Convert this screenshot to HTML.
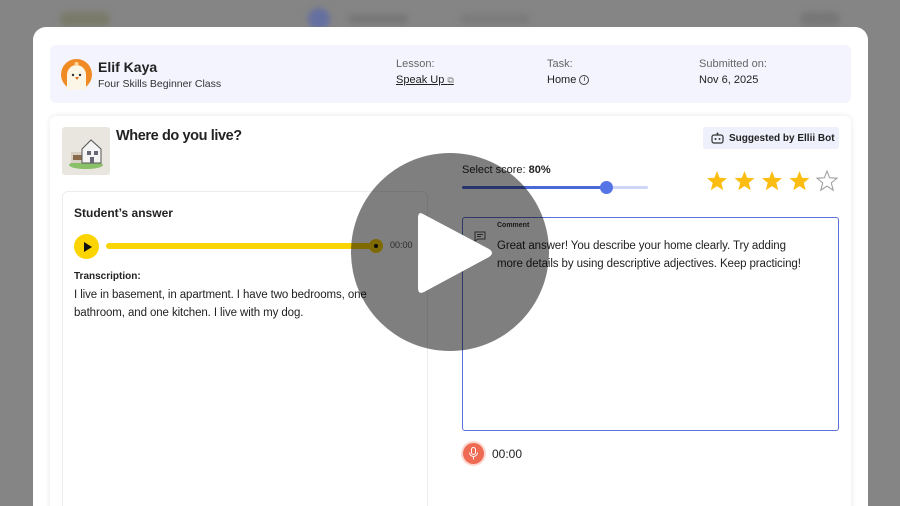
<!DOCTYPE html>
<html><head><meta charset="utf-8"><style>
*{box-sizing:border-box;margin:0;padding:0}
html,body{width:900px;height:506px;overflow:hidden}
body{background:#858585;font-family:"Liberation Sans",sans-serif;color:#222;position:relative}
.topblur{position:absolute;top:0;left:0;width:900px;height:40px}
.modal{position:absolute;left:33px;top:27px;width:835px;height:479px;background:#fff;border-radius:13px 13px 0 0}
.hdr{position:absolute;left:17px;top:18px;width:801px;height:58px;background:#f3f4fd;border-radius:6px}
.lbl{position:absolute;font-size:11px;color:#666}
.val{position:absolute;font-size:11px;color:#222}
.card{position:absolute;left:17px;top:89px;width:801px;height:400px;background:#fff;border-radius:6px;box-shadow:0 0 6px rgba(0,0,0,.1)}
.ans{position:absolute;left:12px;top:75px;width:366px;height:330px;border:1px solid #ececec;border-radius:6px}
.cm{position:absolute;left:412px;top:101px;width:377px;height:214px;border:1.5px solid #5b72d6;border-radius:3px}
.overlay{position:absolute;left:351px;top:153px;width:198px;height:198px;border-radius:50%;background:rgba(0,0,0,.5)}
</style></head><body>
<div class="topblur">
<div style="position:absolute;left:60px;top:12px;width:50px;height:14px;background:#7a7a6a;border-radius:7px;filter:blur(3px)"></div>
<div style="position:absolute;left:308px;top:8px;width:22px;height:22px;background:#6670a0;border-radius:50%;filter:blur(3px)"></div>
<div style="position:absolute;left:348px;top:14px;width:60px;height:10px;background:#777;border-radius:5px;filter:blur(3px)"></div>
<div style="position:absolute;left:460px;top:14px;width:70px;height:10px;background:#7b7b7b;border-radius:5px;filter:blur(3px)"></div>
<div style="position:absolute;left:800px;top:12px;width:40px;height:14px;background:#777;border-radius:7px;filter:blur(3px)"></div>
</div>
<div class="modal">
 <div class="hdr">
  <svg style="position:absolute;left:11px;top:14px" width="31" height="31" viewBox="0 0 31 31"><circle cx="15.5" cy="15.5" r="15.5" fill="#f08a24"/><path d="M6 31 V16 a9.5 10 0 0 1 19 0 V31Z" fill="#fbf6e6"/><circle cx="12" cy="16" r="1.2" fill="#333"/><circle cx="19" cy="16" r="1.2" fill="#333"/><path d="M14 18 h4 l-2 3z" fill="#e07020"/><circle cx="15.5" cy="5" r="2" fill="#fbd9a0"/></svg>
  <div style="position:absolute;left:48px;top:14px;font-size:14px;font-weight:bold;color:#222">Elif Kaya</div>
  <div style="position:absolute;left:48px;top:33px;font-size:10.5px;color:#333">Four Skills Beginner Class</div>
  <div class="lbl" style="left:346px;top:13px">Lesson:</div>
  <div class="val" style="left:346px;top:29px;text-decoration:underline">Speak Up <span style="font-size:9px;color:#777;text-decoration:none">⧉</span></div>
  <div class="lbl" style="left:497px;top:13px">Task:</div>
  <div class="val" style="left:497px;top:29px">Home <span style="display:inline-block;width:10px;height:10px;border:1px solid #444;border-radius:50%;font-size:7px;text-align:center;line-height:8px;vertical-align:middle">i</span></div>
  <div class="lbl" style="left:649px;top:13px">Submitted on:</div>
  <div class="val" style="left:649px;top:29px">Nov 6, 2025</div>
 </div>
 <div class="card">
  <svg style="position:absolute;left:12px;top:11px;border-radius:3px" width="48" height="48" viewBox="0 0 48 48"><rect width="48" height="48" fill="#e9e5df"/><ellipse cx="24" cy="38" rx="17" ry="4" fill="#8bc06a"/><rect x="9" y="25" width="13" height="11" fill="#d8d0c4"/><rect x="11" y="28" width="9" height="5" fill="#8a6a4a"/><path d="M20 22 L29 13 L39 22 V36 H20Z" fill="#f4f4f4" stroke="#555" stroke-width="1"/><rect x="25" y="24" width="4" height="4" fill="#667"/><rect x="32" y="24" width="4" height="4" fill="#667"/><rect x="28" y="30" width="4" height="6" fill="#667"/></svg>
  <div style="position:absolute;left:66px;top:12px;font-size:14.5px;font-weight:bold;letter-spacing:-.4px">Where do you live?</div>
  <div style="position:absolute;left:653px;top:11px;width:136px;height:22px;background:#eef0fb;border-radius:3px;font-size:10px;font-weight:bold;padding:6px 0 0 26px;white-space:nowrap">Suggested by Ellii Bot
   <svg style="position:absolute;left:8px;top:5px" width="13" height="12" viewBox="0 0 13 12"><rect x="1" y="3" width="11" height="8" rx="2" fill="none" stroke="#333" stroke-width="1.2"/><circle cx="6.5" cy="1.5" r="1" fill="#333"/><circle cx="4.5" cy="7" r="1" fill="#333"/><circle cx="8.5" cy="7" r="1" fill="#333"/></svg></div>
  <div style="position:absolute;left:412px;top:48px;font-size:11px">Select score: <b>80%</b></div>
  <div style="position:absolute;left:412px;top:70px;width:186px;height:3px;background:#cdd5f8;border-radius:2px"></div>
  <div style="position:absolute;left:412px;top:70px;width:144px;height:3px;background:#4d68d8;border-radius:2px"></div>
  <div style="position:absolute;left:550px;top:65px;width:13px;height:13px;background:#5574e6;border-radius:50%"></div>
  <svg style="position:absolute;left:656px;top:54px" width="134" height="24" viewBox="0 0 134 24">
   <defs><path id="s" d="M11 1 L13.6 7.8 L21 8.2 L15.3 12.9 L17.2 20.2 L11 16.1 L4.8 20.2 L6.7 12.9 L1 8.2 L8.4 7.8Z"/></defs>
   <use href="#s" x="0" fill="#fbbd12"/><use href="#s" x="27.5" fill="#fbbd12"/><use href="#s" x="55" fill="#fbbd12"/><use href="#s" x="82.5" fill="#fbbd12"/><use href="#s" x="110" fill="none" stroke="#999" stroke-width="1"/>
  </svg>
  <div class="ans">
   <div style="position:absolute;left:11px;top:14px;font-size:12px;font-weight:bold">Student’s answer</div>
   <div style="position:absolute;left:11px;top:42px;width:25px;height:25px;border-radius:50%;background:#fcd500"></div>
   <div style="position:absolute;left:21px;top:50px;width:0;height:0;border-left:8px solid #111;border-top:5px solid transparent;border-bottom:5px solid transparent"></div>
   <div style="position:absolute;left:43px;top:51px;width:272px;height:6px;background:#fcd500;border-radius:3px"></div>
   <div style="position:absolute;left:306px;top:47px;width:14px;height:14px;border-radius:50%;background:#fcd500"></div>
   <div style="position:absolute;left:311px;top:52px;width:4px;height:4px;border-radius:50%;background:#111"></div>
   <div style="position:absolute;left:327px;top:48px;font-size:9px;color:#555">00:00</div>
   <div style="position:absolute;left:11px;top:79px;font-size:10px;font-weight:bold">Transcription:</div>
   <div style="position:absolute;left:11px;top:94px;width:340px;font-size:11.5px;line-height:18px;letter-spacing:-.1px">I live in basement, in apartment. I have two bedrooms, one bathroom, and one kitchen. I live with my dog.</div>
  </div>
  <div class="cm">
   <div style="position:absolute;left:34px;top:4px;font-size:7px;font-weight:bold;color:#333">Comment</div>
   <svg style="position:absolute;left:11px;top:13px" width="12" height="11" viewBox="0 0 12 11"><path d="M1 1h10v7H4l-3 2z" fill="none" stroke="#555" stroke-width="1"/><path d="M3 3.5h6M3 5.5h4" stroke="#555"/></svg>
   <div style="position:absolute;left:34px;top:19px;width:336px;font-size:11.5px;line-height:18px;letter-spacing:-.1px">Great answer! You describe your home clearly. Try adding<br>more details by using descriptive adjectives. Keep practicing!</div>
  </div>
  <div style="position:absolute;left:413px;top:327px;width:21px;height:21px;border-radius:50%;background:#ef6a52;box-shadow:0 0 0 2px #fbd7cf"></div>
  <svg style="position:absolute;left:418px;top:331px" width="11" height="13" viewBox="0 0 11 13"><rect x="3.5" y="0.5" width="4" height="7" rx="2" fill="none" stroke="#fff"/><path d="M1.5 5.5a4 4 0 0 0 8 0M5.5 9.5v3" fill="none" stroke="#fff"/></svg>
  <div style="position:absolute;left:442px;top:331px;font-size:12px">00:00</div>
 </div>
</div>
<div class="overlay"></div>
<svg style="position:absolute;left:415px;top:208px" width="80" height="90" viewBox="0 0 80 90"><path d="M8 6 Q3 3 3 10 V80 Q3 87 9 84 L74 49 Q80 45 74 41Z" fill="#fff"/></svg>
</body></html>
